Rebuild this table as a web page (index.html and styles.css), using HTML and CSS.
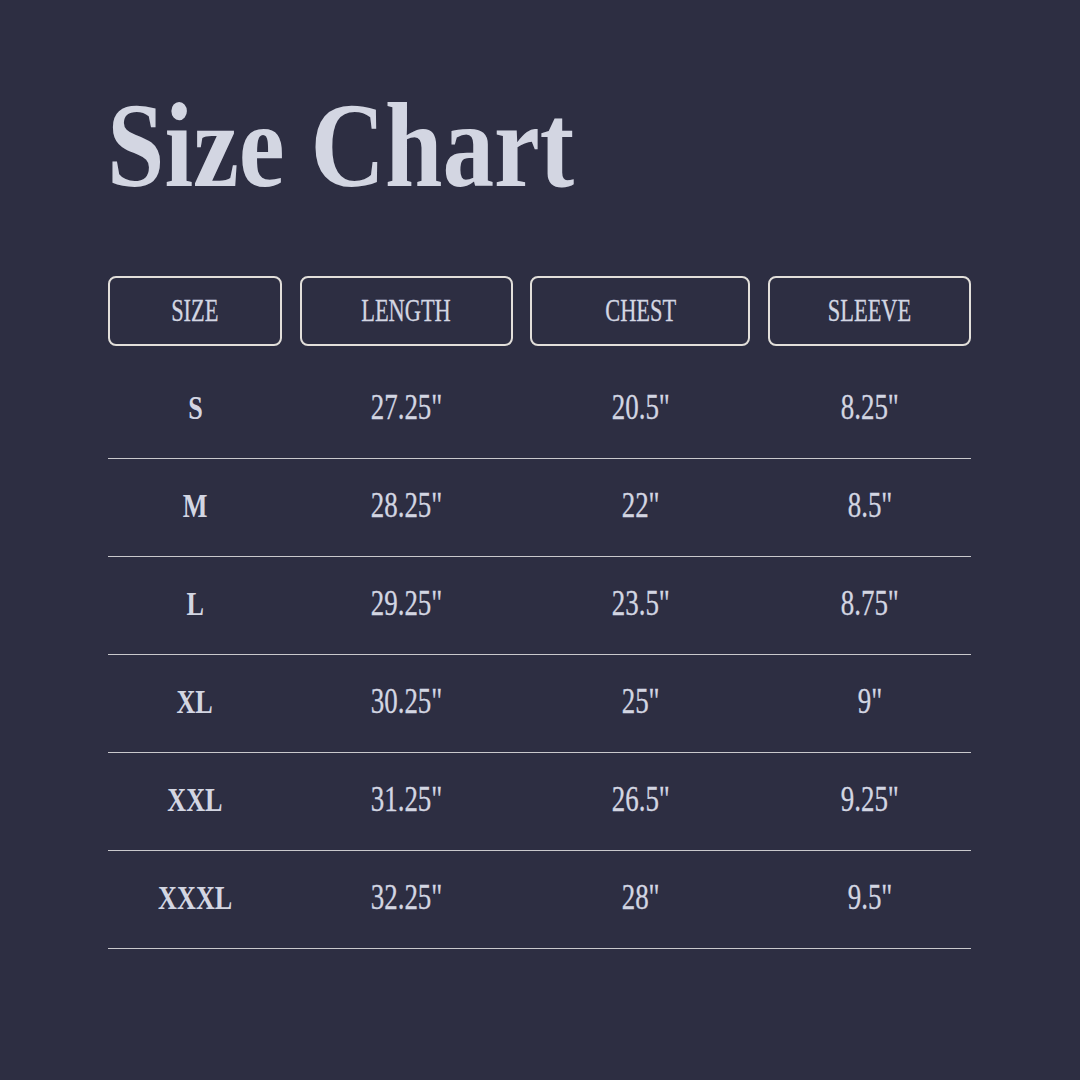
FILE: index.html
```html
<!DOCTYPE html>
<html>
<head>
<meta charset="utf-8">
<link rel="stylesheet" href="styles.css">
</head>
<body>
<div class="page">
  <h1 class="title"><span class="squeeze">Size Chart</span></h1>
  <div class="head">
    <div class="hcell"><span class="htext">SIZE</span></div>
    <div class="hcell"><span class="htext">LENGTH</span></div>
    <div class="hcell"><span class="htext">CHEST</span></div>
    <div class="hcell"><span class="htext">SLEEVE</span></div>
  </div>
  <div class="rows">
    <div class="row"><span class="size">S</span><span class="val">27.25"</span><span class="val">20.5"</span><span class="val">8.25"</span></div>
    <div class="row"><span class="size">M</span><span class="val">28.25"</span><span class="val">22"</span><span class="val">8.5"</span></div>
    <div class="row"><span class="size">L</span><span class="val">29.25"</span><span class="val">23.5"</span><span class="val">8.75"</span></div>
    <div class="row"><span class="size">XL</span><span class="val">30.25"</span><span class="val">25"</span><span class="val">9"</span></div>
    <div class="row"><span class="size">XXL</span><span class="val">31.25"</span><span class="val">26.5"</span><span class="val">9.25"</span></div>
    <div class="row"><span class="size">XXXL</span><span class="val">32.25"</span><span class="val">28"</span><span class="val">9.5"</span></div>
  </div>
</div>
</body>
</html>
```
FILE: styles.css
```css
html, body {
  margin: 0;
  padding: 0;
  background: #2d2e42;
}
body {
  width: 1080px;
  height: 1080px;
  overflow: hidden;
  font-family: "Liberation Serif", "Times New Roman", serif;
  color: #d3d6e2;
}
.page {
  padding: 86px 0 0 108px;
}
.title {
  margin: 0 0 70px -1px;
  height: 120px;
  font-size: 120px;
  line-height: 1;
  font-weight: 700;
  white-space: nowrap;
}
.squeeze {
  display: inline-block;
  transform: scaleX(0.86);
  transform-origin: left center;
}
.head, .row {
  display: grid;
  grid-template-columns: 174px 213px 220px 203px;
  column-gap: 17.7px;
  width: 863px;
}
.hcell {
  box-sizing: border-box;
  height: 70px;
  border: 2px solid #e2dfda;
  border-radius: 8px;
  display: flex;
  align-items: center;
  justify-content: center;
}
.htext {
  display: inline-block;
  font-size: 32px;
  transform: scaleX(0.7);
  line-height: 1;
  margin-top: -3px;
  -webkit-text-stroke: 0.3px #d3d6e2;
}
.rows {
  margin-top: 15px;
}
.row {
  box-sizing: border-box;
  height: 98px;
  border-bottom: 1px solid #c9c9cc;
  align-items: center;
  justify-items: center;
  padding-bottom: 4px;
}
.size {
  display: inline-block;
  font-size: 34px;
  font-weight: 700;
  transform: scaleX(0.77);
}
.val {
  display: inline-block;
  font-size: 35px;
  transform: scaleX(0.77);
  -webkit-text-stroke: 0.3px #d3d6e2;
}
```
